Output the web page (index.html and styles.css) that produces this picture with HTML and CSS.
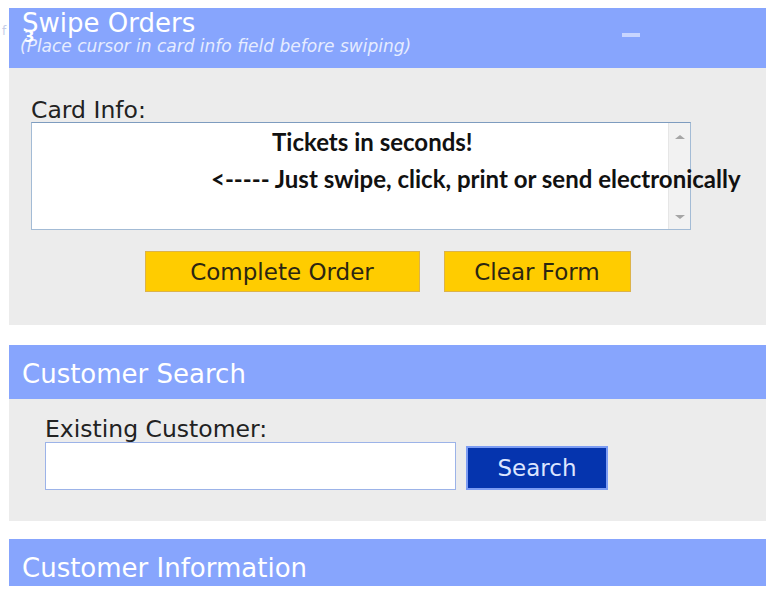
FILE: index.html
```html
<!DOCTYPE html>
<html lang="en">
<head>
    <meta charset="UTF-8">
    <meta name="viewport" content="width=device-width, initial-scale=1.0">
    <title>Swipe Orders</title>
    <link rel="stylesheet" href="styles.css">
</head>
<body>

    <span class="stray stray-f">f</span>
    <span class="stray stray-3">3</span>

    <div class="page">

        <div class="panel swipe-panel">
            <div class="panel-head">
                <div class="panel-title">Swipe Orders</div>
                <div class="panel-sub">(Place cursor in card info field before swiping)</div>
                <span class="minimize"></span>
            </div>
            <div class="panel-body">
                <label class="field-label" for="cardInfo">Card Info:</label>
                <div class="card-wrap">
                    <textarea id="cardInfo" class="card-info"></textarea>
                    <div class="scrollbar">
                        <span class="arrow-up"></span>
                        <span class="arrow-down"></span>
                    </div>
                    <div class="promo">
                        <div class="promo-line promo-one">Tickets in seconds!</div>
                        <div class="promo-line promo-two">&lt;----- Just swipe, click, print or send electronically</div>
                    </div>
                </div>
                <div class="actions">
                    <button class="btn-yellow btn-complete">Complete Order</button>
                    <button class="btn-yellow btn-clear">Clear Form</button>
                </div>
            </div>
        </div>

        <div class="panel search-panel">
            <div class="panel-head">
                <div class="panel-title">Customer Search</div>
            </div>
            <div class="panel-body">
                <label class="field-label" for="existingCustomer">Existing Customer:</label>
                <div class="search-row">
                    <input type="text" id="existingCustomer" class="search-input">
                    <button class="btn-search">Search</button>
                </div>
            </div>
        </div>

        <div class="panel info-panel">
            <div class="panel-head">
                <div class="panel-title">Customer Information</div>
            </div>
        </div>

    </div>

</body>
</html>
```

FILE: styles.css
```css
body, html {
    margin: 0;
    padding: 0;
    font-family: "DejaVu Sans", Verdana, sans-serif;
    background-color: #ffffff;
    color: #222222;
}
.page {
    padding: 8px 11px 0 9px;
    position: relative;
}
.stray {
    position: absolute;
    z-index: 5;
    font-family: "DejaVu Sans", sans-serif;
}
.stray-f {
    left: 2px;
    top: 24px;
    font-size: 12px;
    color: #c3cde9;
}
.stray-3 {
    left: 24px;
    top: 28px;
    font-size: 15px;
    font-weight: bold;
    color: #ffffff;
}
.panel {
    background-color: #ececec;
}
.search-panel {
    margin-top: 20px;
}
.info-panel {
    margin-top: 18px;
}
.panel-head {
    position: relative;
    background-color: #87a5fd;
    color: #ffffff;
    padding: 5px 13px 0 13px;
    height: 49px;
}
.panel-title {
    font-size: 26px;
    line-height: 48px;
}
.swipe-panel .panel-head {
    padding-top: 1px;
    height: 59px;
}
.swipe-panel .panel-title {
    line-height: 28px;
}
.info-panel .panel-head {
    height: 42px;
    overflow: hidden;
}
.panel-sub {
    font-size: 17px;
    line-height: 18px;
    font-style: italic;
    color: #e6ecff;
    margin-left: -2px;
}
.minimize {
    position: absolute;
    left: 613px;
    top: 25px;
    width: 18px;
    height: 4px;
    background-color: #c8d5ff;
}
.swipe-panel .panel-body {
    padding: 30px 22px 33px 22px;
}
.field-label {
    display: block;
    font-size: 23.5px;
    line-height: 24px;
    color: #222222;
}
.card-wrap {
    position: relative;
    box-sizing: border-box;
    display: flex;
    width: 660px;
    height: 108px;
    border: 1px solid #a3bbd5;
    border-top-color: #7e9cbf;
    background-color: #ffffff;
}
.card-info {
    flex: 1;
    margin: 0;
    border: none;
    background-color: #ffffff;
    resize: none;
    overflow: hidden;
}
.scrollbar {
    width: 21px;
    background-color: #f2f2f2;
    border-left: 1px solid #e6e6e6;
    display: flex;
    flex-direction: column;
    justify-content: space-between;
    align-items: center;
    padding: 12px 0 10px 0;
}
.arrow-up, .arrow-down {
    width: 0;
    height: 0;
    border-left: 5px solid transparent;
    border-right: 5px solid transparent;
}
.arrow-up {
    border-bottom: 4px solid #a6a6a6;
}
.arrow-down {
    border-top: 4px solid #a6a6a6;
}
.promo {
    position: absolute;
    left: -1px;
    top: -1px;
    font-family: Lato, "Open Sans", sans-serif;
    font-weight: bold;
    font-size: 24px;
    color: #111111;
    white-space: nowrap;
    pointer-events: none;
}
.promo-line {
    line-height: 37px;
}
.promo-one {
    padding-left: 241px;
    margin-top: 1px;
}
.promo-two {
    padding-left: 180px;
}
.actions {
    display: flex;
    justify-content: center;
    gap: 24px;
    margin-top: 21px;
}
.btn-yellow {
    box-sizing: border-box;
    height: 41px;
    background-color: #ffcc00;
    border: 1px solid #dcb34a;
    color: #2b2612;
    font-family: "DejaVu Sans", Verdana, sans-serif;
    font-size: 23px;
    padding: 0;
}
.btn-complete {
    width: 275px;
}
.btn-clear {
    width: 187px;
}
.search-panel .panel-body {
    padding: 18px 36px 31px 36px;
}
.search-row {
    display: flex;
    align-items: flex-end;
    gap: 10px;
    margin-top: 1px;
}
.search-input {
    box-sizing: border-box;
    width: 411px;
    height: 48px;
    margin: 0;
    border: 1px solid #9cb3e8;
    background-color: #ffffff;
}
.btn-search {
    box-sizing: border-box;
    width: 142px;
    height: 44px;
    background-color: #0534ae;
    border: 2px solid #7c9cf3;
    color: #dce5ff;
    font-family: "DejaVu Sans", Verdana, sans-serif;
    font-size: 23px;
    padding: 0;
}
```
